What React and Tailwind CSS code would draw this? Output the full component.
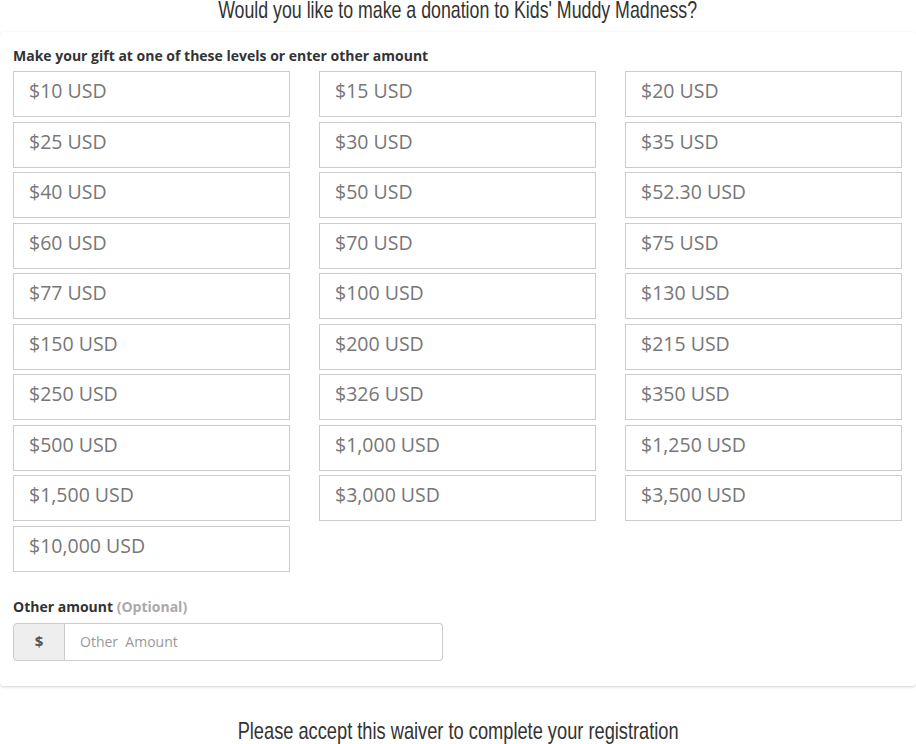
const amounts = [
  "$10 USD", "$15 USD", "$20 USD",
  "$25 USD", "$30 USD", "$35 USD",
  "$40 USD", "$50 USD", "$52.30 USD",
  "$60 USD", "$70 USD", "$75 USD",
  "$77 USD", "$100 USD", "$130 USD",
  "$150 USD", "$200 USD", "$215 USD",
  "$250 USD", "$326 USD", "$350 USD",
  "$500 USD", "$1,000 USD", "$1,250 USD",
  "$1,500 USD", "$3,000 USD", "$3,500 USD",
  "$10,000 USD",
];

const heading = { fontFamily: "'Liberation Sans', Arial, sans-serif" };

export default function App() {
  return (
    <div className="w-[916px] h-[744px] overflow-hidden bg-white text-[#333]" style={{ fontFamily: "'Open Sans', sans-serif" }}>
      <div className="h-[32px] flex justify-center">
        <h1 className="inline-block whitespace-nowrap text-[24px] leading-[24px] -mt-[2px] scale-x-[0.74] text-[#333]" style={heading}>
          Would you like to make a donation to Kids' Muddy Madness?
        </h1>
      </div>

      <div className="bg-white rounded-[4px] shadow-[0_1px_3px_rgba(0,0,0,0.18)] pl-[13px] pr-[14px] pt-[15px] pb-[25px]">
        <p className="text-[14px] font-bold leading-[18px] mb-[6px]">
          Make your gift at one of these levels or enter other amount
        </p>

        <div className="grid grid-cols-3 gap-x-[29px] gap-y-[4.5px]">
          {amounts.map((a) => (
            <div
              key={a}
              className="h-[46px] border border-[#ccc] pl-[15px] pt-[7px] text-[19.5px] leading-[24px] text-[#777]"
            >
              {a}
            </div>
          ))}
        </div>

        <p className="mt-[26px] text-[14px] font-bold leading-[18px]">
          Other amount <span className="text-[#aaa]">(Optional)</span>
        </p>

        <div className="mt-[7px] flex w-[430px] h-[38px]">
          <div className="w-[52px] flex items-center justify-center bg-[#eee] border border-[#ccc] rounded-l-[4px] text-[15px] font-bold text-[#555]">
            $
          </div>
          <div className="flex-1 flex items-center border border-l-0 border-[#ccc] rounded-r-[4px] pl-[15px] text-[14px] text-[#999]">
            Other&nbsp; Amount
          </div>
        </div>
      </div>

      <div className="mt-[31px] flex justify-center">
        <h2 className="inline-block whitespace-nowrap text-[24px] leading-[28px] scale-x-[0.76] text-[#333]" style={heading}>
          Please accept this waiver to complete your registration
        </h2>
      </div>
    </div>
  );
}
